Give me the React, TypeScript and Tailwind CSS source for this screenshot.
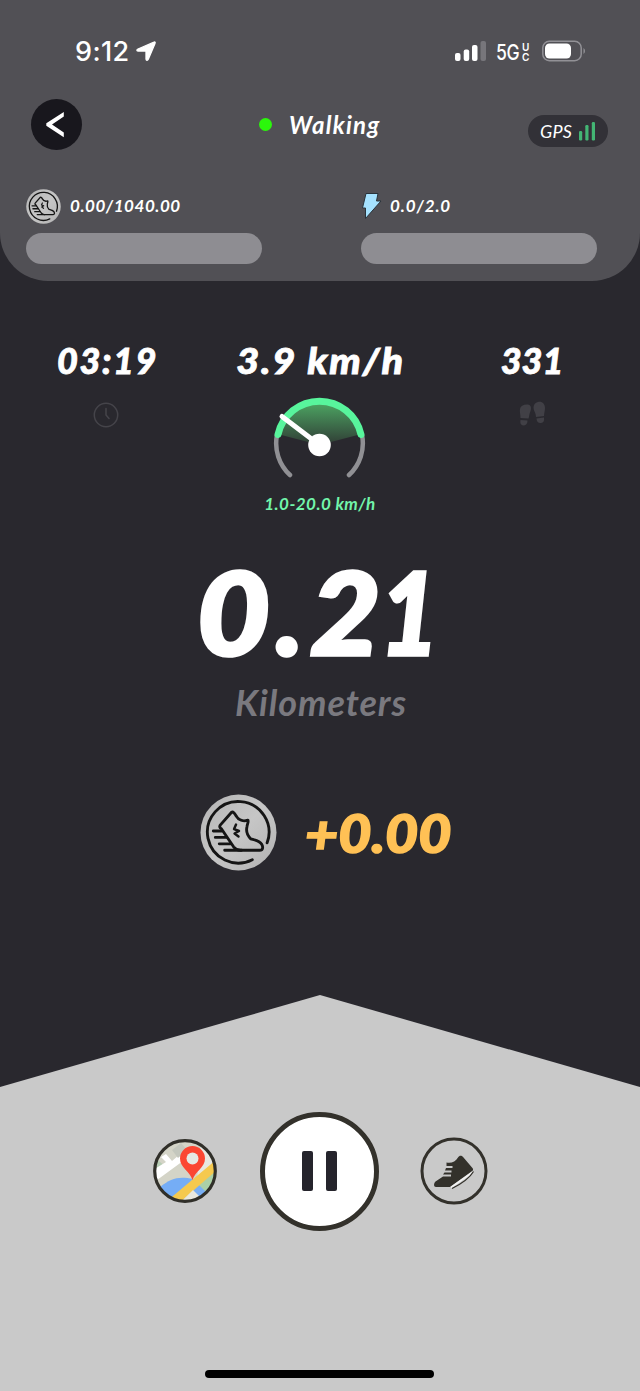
import React from "react";

const lato = "font-['Lato',sans-serif] italic whitespace-nowrap";

function Coin({ className }: { className: string }) {
  return (
    <svg viewBox="0 0 78 78" className={className} fill="none" stroke="#151515" strokeLinecap="round" strokeLinejoin="round">
      <defs>
        <linearGradient id="silver" x1="0" y1="0" x2="1" y2="1">
          <stop offset="0" stopColor="#b4b4b4" />
          <stop offset="0.5" stopColor="#c6c6c6" />
          <stop offset="1" stopColor="#b2b2b2" />
        </linearGradient>
      </defs>
      <circle cx="39" cy="39" r="38.5" fill="url(#silver)" stroke="none" />
      <path d="M68 49.5A31.2 31.2 0 1 0 53 66.5" strokeWidth="2.9" />
      <path d="M32 18.500L20.500 31.500C19.500 33 20 34.500 21.500 35L34 53.500C36 56 38 57 41 57H60.500C64 57 64 53.500 62.500 51C60.500 47.500 57 47 51.500 45.500C48 42 46.500 38 47.500 33.500C48 30 49.500 28 48.500 26.500C44 28 39 26.500 36.500 22C35 19.500 33.500 17.500 32 18.500Z" strokeWidth="2.9" />
      <path d="M13.500 37.500H22M15.500 44H26.500M19.500 50.500H31M25 57H42" strokeWidth="2.900" />
      <path d="M36.500 31L34.500 35.500L39.500 37.500L35 40L39 43" strokeWidth="2.500" />
    </svg>
  );
}

function StatusBar() {
  return (
    <div className="flex h-[98px] items-center pt-1 pl-[75px] text-white">
      <span className="w-[60px] whitespace-nowrap pt-[2px] font-['Inter',sans-serif] text-[27px] font-medium leading-8 tracking-[0.4px]">9:12</span>
      <svg viewBox="0 0 22 22" className="h-[22px] w-[22px]">
        <path d="M19 2.200L3 9C1.500 9.700 1.500 11 3 11H11V19C11 20.500 12.500 21 13.300 19.300L20 3.400C20.500 2 20 1.700 19 2.200Z" fill="#fff" stroke="#fff" strokeWidth="1.300" strokeLinejoin="round" />
      </svg>
      <svg viewBox="0 0 32 22" className="ml-[298px] h-[22px] w-8" fill="#fff">
        <rect x="0" y="13" width="5.500" height="8" rx="2" />
        <rect x="8.700" y="9.500" width="5.500" height="11.500" rx="2" />
        <rect x="17" y="5" width="5.500" height="16" rx="2" />
        <rect x="25.500" y="1" width="5.500" height="20" rx="2" fill="#77767b" />
      </svg>
      <span className="ml-[9px] w-[26px] whitespace-nowrap pt-[2px] font-['Inter',sans-serif] text-[22px] font-medium leading-6"><span className="inline-block origin-left scale-x-[0.8] tracking-[-0.5px]">5G</span></span>
      <span className="flex h-[20px] w-[10px] flex-col pt-[1px] font-['Inter',sans-serif] text-[10px] font-semibold">
        <span className="h-[10px] leading-[10px]">U</span>
        <span className="h-[10px] leading-[10px]">C</span>
      </span>
      <svg viewBox="0 0 44 22" className="ml-[9px] h-[22px] w-11">
        <rect x="1.800" y="1.300" width="38.400" height="19.400" rx="6.500" fill="none" stroke="#929196" strokeWidth="1.500" />
        <rect x="4" y="3.500" width="26" height="15" rx="4.500" fill="#fff" />
        <path d="M42.500 8V14Q44 13 44 11T42.500 8Z" fill="#929196" />
      </svg>
    </div>
  );
}

function NavBar() {
  return (
    <div className="flex h-[52px] items-center pl-[31px]">
      <button className="flex h-[51px] w-[51px] items-center justify-center rounded-full bg-[#18171d]">
        <svg viewBox="0 0 51 51" className="h-[51px] w-[51px]">
          <path d="M32.800 13V17.500L21 25.500L32.800 33.500V38.200L15.300 26.800V24.200Z" fill="#fff" />
        </svg>
      </button>
      <span className="ml-[177px] h-[13px] w-[13px] rounded-full bg-[#2bf70b]" />
      <span className={`${lato} ml-[17px] w-[239px] pt-[2px] text-[24px] font-bold leading-7 tracking-[1.2px] text-white`}>Walking</span>
      <div className="mt-[13px] flex h-8 w-[80px] items-center rounded-full bg-[#323137] pl-3">
        <span className={`${lato} w-[39px] text-[18px] font-normal leading-6 tracking-[0.2px] text-white`}>GPS</span>
        <svg viewBox="0 0 18 20" className="h-5 w-[18px]" fill="#43b674">
          <rect x="0" y="10" width="3.200" height="9.500" rx="1.200" />
          <rect x="6.300" y="4" width="3.200" height="15.500" rx="1.200" />
          <rect x="12.800" y="1" width="3.200" height="18.500" rx="1.200" />
        </svg>
      </div>
    </div>
  );
}

function Header() {
  return (
    <header className="h-[281px] rounded-b-[48px] bg-[#515055]">
      <StatusBar />
      <NavBar />
      <div className="mt-[39px] flex gap-[99px] pl-[26px]">
        <div className="w-[236px]">
          <div className="flex h-[34px] items-center gap-[9px]">
            <Coin className="h-[35px] w-[35px]" />
            <span className={`${lato} text-[17px] font-bold leading-5 tracking-[0.55px] text-white`}>0.00/1040.00</span>
          </div>
          <div className="mt-[10px] h-[31px] rounded-full bg-[#8e8d92]" />
        </div>
        <div className="w-[236px]">
          <div className="flex h-[34px] items-center gap-[8px]">
            <svg viewBox="0 0 21 28" className="h-7 w-[21px]">
              <path d="M5 1.500H17L15.500 9H20L4.500 26.500V16H1.500Z" fill="#a5e2ff" stroke="#29333b" strokeWidth="1" strokeLinejoin="round" />
            </svg>
            <span className={`${lato} text-[17px] font-bold leading-5 tracking-[0.9px] text-white`}>0.0/2.0</span>
          </div>
          <div className="mt-[10px] h-[31px] rounded-full bg-[#8e8d92]" />
        </div>
      </div>
    </header>
  );
}

function Gauge() {
  return (
    <svg viewBox="0 0 94 84" className="h-[84px] w-[94px]" fill="none" strokeLinecap="round">
      <defs>
        <linearGradient id="fan" x1="0" y1="0" x2="0" y2="1">
          <stop offset="0" stopColor="#4eab65" />
          <stop offset="1" stopColor="#303c35" />
        </linearGradient>
      </defs>
      <path d="M17 78A43 43 0 0 1 4 38M76 78A43 43 0 0 0 89 38" stroke="#909094" strokeWidth="4.500" />
      <path d="M46.500 48L4.500 37A43 43 0 0 1 88.500 37Z" fill="url(#fan)" />
      <path d="M5 37.500A42.500 42.500 0 0 1 88 37.500" stroke="#58f59c" strokeWidth="7" />
      <path d="M46.500 48L9 19.500" stroke="#fff" strokeWidth="5" />
      <circle cx="46.500" cy="48" r="11.300" fill="#fff" />
    </svg>
  );
}

function Metrics() {
  const value = `${lato} h-10 text-[36px] font-black leading-10 text-white [-webkit-text-stroke:0.8px_#fff]`;
  return (
    <section className="flex h-[236px] pt-[59px]">
      <div className="flex w-[213px] flex-col items-center">
        <span className={`${value} ml-[2px] tracking-[1.6px]`}>03:19</span>
        <svg viewBox="0 0 26 26" className="mt-[22px] mr-[2px] h-[26px] w-[26px]" fill="none" stroke="#45444a" strokeWidth="1.500" strokeLinecap="round">
          <circle cx="13" cy="13" r="11.700" />
          <path d="M13 6.500V13L16 16.500" />
        </svg>
      </div>
      <div className="flex w-[213px] flex-col items-center">
        <span className={`${value} ml-[2px] scale-x-110 tracking-[1.6px]`}>3.9 km/h</span>
        <div className="mt-[17px]"><Gauge /></div>
        <span className={`${lato} mt-[13px] ml-[1px] text-[17px] font-bold leading-5 tracking-[0.45px] text-[#72f5ab]`}>1.0-20.0 km/h</span>
      </div>
      <div className="flex w-[212px] flex-col items-center">
        <span className={value}>331</span>
        <svg viewBox="0 0 28 26" className="mt-[21px] h-[26px] w-7" fill="#414046">
          <path d="M9 3.500C13 3 14 7 12 11.500C11 13.500 11.500 15 10.500 17.500L2.500 17C2.500 13 1.500 11 2 8C2.500 5 5 3.500 9 3.500ZM2.500 19L9.500 19.500C9.500 23 8 24.500 5 24.500C2.500 24 2 22 2.500 19Z" />
          <path d="M20 1C24 0 27 3 27 7C27 10 26 12 26 15L18 16C18 12 15.500 10 15.500 6.500C15.500 4 17 1.500 20 1ZM18.500 17.500L26 16.500C26.500 20 25.500 21.500 23 22C20 22 19 21 18.500 17.500Z" />
        </svg>
      </div>
    </section>
  );
}

function Controls() {
  return (
    <footer className="flex h-[396px] flex-col bg-[#c9c9c9] [clip-path:polygon(0_92px,50%_0,100%_92px,100%_100%,0_100%)]">
      <div className="mt-[116px] flex h-[120px] items-center pl-[153px]">
        <svg viewBox="0 0 64 64" className="h-16 w-16">
          <defs>
            <clipPath id="disc"><circle cx="32" cy="32" r="30" /></clipPath>
          </defs>
          <g clipPath="url(#disc)">
            <rect width="64" height="64" fill="#d4d4c7" />
            <path d="M0 17L13 28L0 39Z" fill="#b7cdb5" />
            <path d="M0 23L13 15L19 22L26 16L30 22L0 44V31L13 23L8 18L0 23Z" fill="#fff" />
            <path d="M19 11L25 19L34 11L28 4Z" fill="#c4c7bd" />
            <path d="M48 6L64 20V28L44 40Z" fill="#e8e8e2" />
            <path d="M7 48C18 39 26 37 40 40L20 64H0Z" fill="#75adf5" />
            <path d="M43 48L64 27V64H55Z" fill="#abd0a7" />
            <path d="M39 50L45 45L64 64H46Z" fill="#79aff4" />
            <path d="M14 62L64 20V31L26 64Z" fill="#f5c94e" />
            <path d="M27 64L40 51L53 64Z" fill="#e8e8df" />
          </g>
          <path d="M39.500 41C37 32 27 29 27 19.500A12.500 12.500 0 0 1 52 19.500C52 29 42 32 39.500 41Z" fill="#fb4632" />
          <circle cx="39.500" cy="19.500" r="6" fill="#e5e9e4" />
          <circle cx="32" cy="32" r="30.300" fill="none" stroke="#302f29" strokeWidth="3.200" />
        </svg>
        <button className="ml-[43px] flex h-[119px] w-[119px] items-center justify-center gap-[13px] rounded-full border-[5px] border-[#33312b] bg-white">
          <span className="h-10 w-[11px] rounded-[2px] bg-[#25242c]" />
          <span className="h-10 w-[11px] rounded-[2px] bg-[#25242c]" />
        </button>
        <svg viewBox="0 0 68 68" className="ml-[41px] h-[68px] w-[68px]">
          <circle cx="34" cy="34" r="32" fill="none" stroke="#33312b" strokeWidth="3" />
          <path d="M26.500 25.500C31 26.500 35.500 25 38 20.500C39.500 18 42 18.500 43.500 20.500L52 30.500C53.500 32 53.500 33.500 51.500 34.500L30 50H16C13.500 50 13.500 46.500 15.500 44.500L23 39.500H31V37.500H23L24.500 35.500H31.500V33.500H25L26 31H32.500V29H26.500Z" fill="#33312b" />
          <path d="M31 50.500L53 35" fill="none" stroke="#f3f3f3" strokeWidth="1.700" />
          <path d="M32 51.500C37 49 49 42 53.500 34.500" fill="none" stroke="#33312b" strokeWidth="1.300" />
        </svg>
      </div>
      <div className="mt-auto mb-[13px] ml-[205px] h-2 w-[229px] rounded-full bg-black" />
    </footer>
  );
}

export default function App() {
  return (
    <main className="flex h-[1391px] w-[640px] flex-col overflow-hidden bg-[#29282e]">
      <Header />
      <Metrics />
      <section className="flex h-[208px] flex-col items-center pt-[33px]">
        <div className={`${lato} flex h-[120px] pr-[3px] text-[115px] font-black leading-[121px] text-white [-webkit-text-stroke:3.5px_#fff]`}>
          <span className="mr-[9px] ml-[2px] origin-center scale-x-[1.1]">0</span>
          <span>.</span>
          <span className="ml-[9px] origin-center scale-x-[1.06]">2</span>
          <span className="-ml-[7px] origin-right scale-x-[0.88]">1</span>
        </div>
        <div className={`${lato} mt-[12px] ml-[2px] h-10 text-[36px] font-bold leading-10 tracking-[0.9px] text-[#7a797f]`}>Kilometers</div>
      </section>
      <section className="flex h-[269px] items-start pt-[69px] pl-[200px]">
        <Coin className="h-[77px] w-[77px]" />
        <div className={`${lato} ml-[28px] h-[77px] origin-left scale-x-[1.08] text-[53px] font-black leading-[77px] text-[#ffc155] [-webkit-text-stroke:1.6px_#ffc155]`}>+0.00</div>
      </section>
      <div className="h-px" />
      <Controls />
    </main>
  );
}
